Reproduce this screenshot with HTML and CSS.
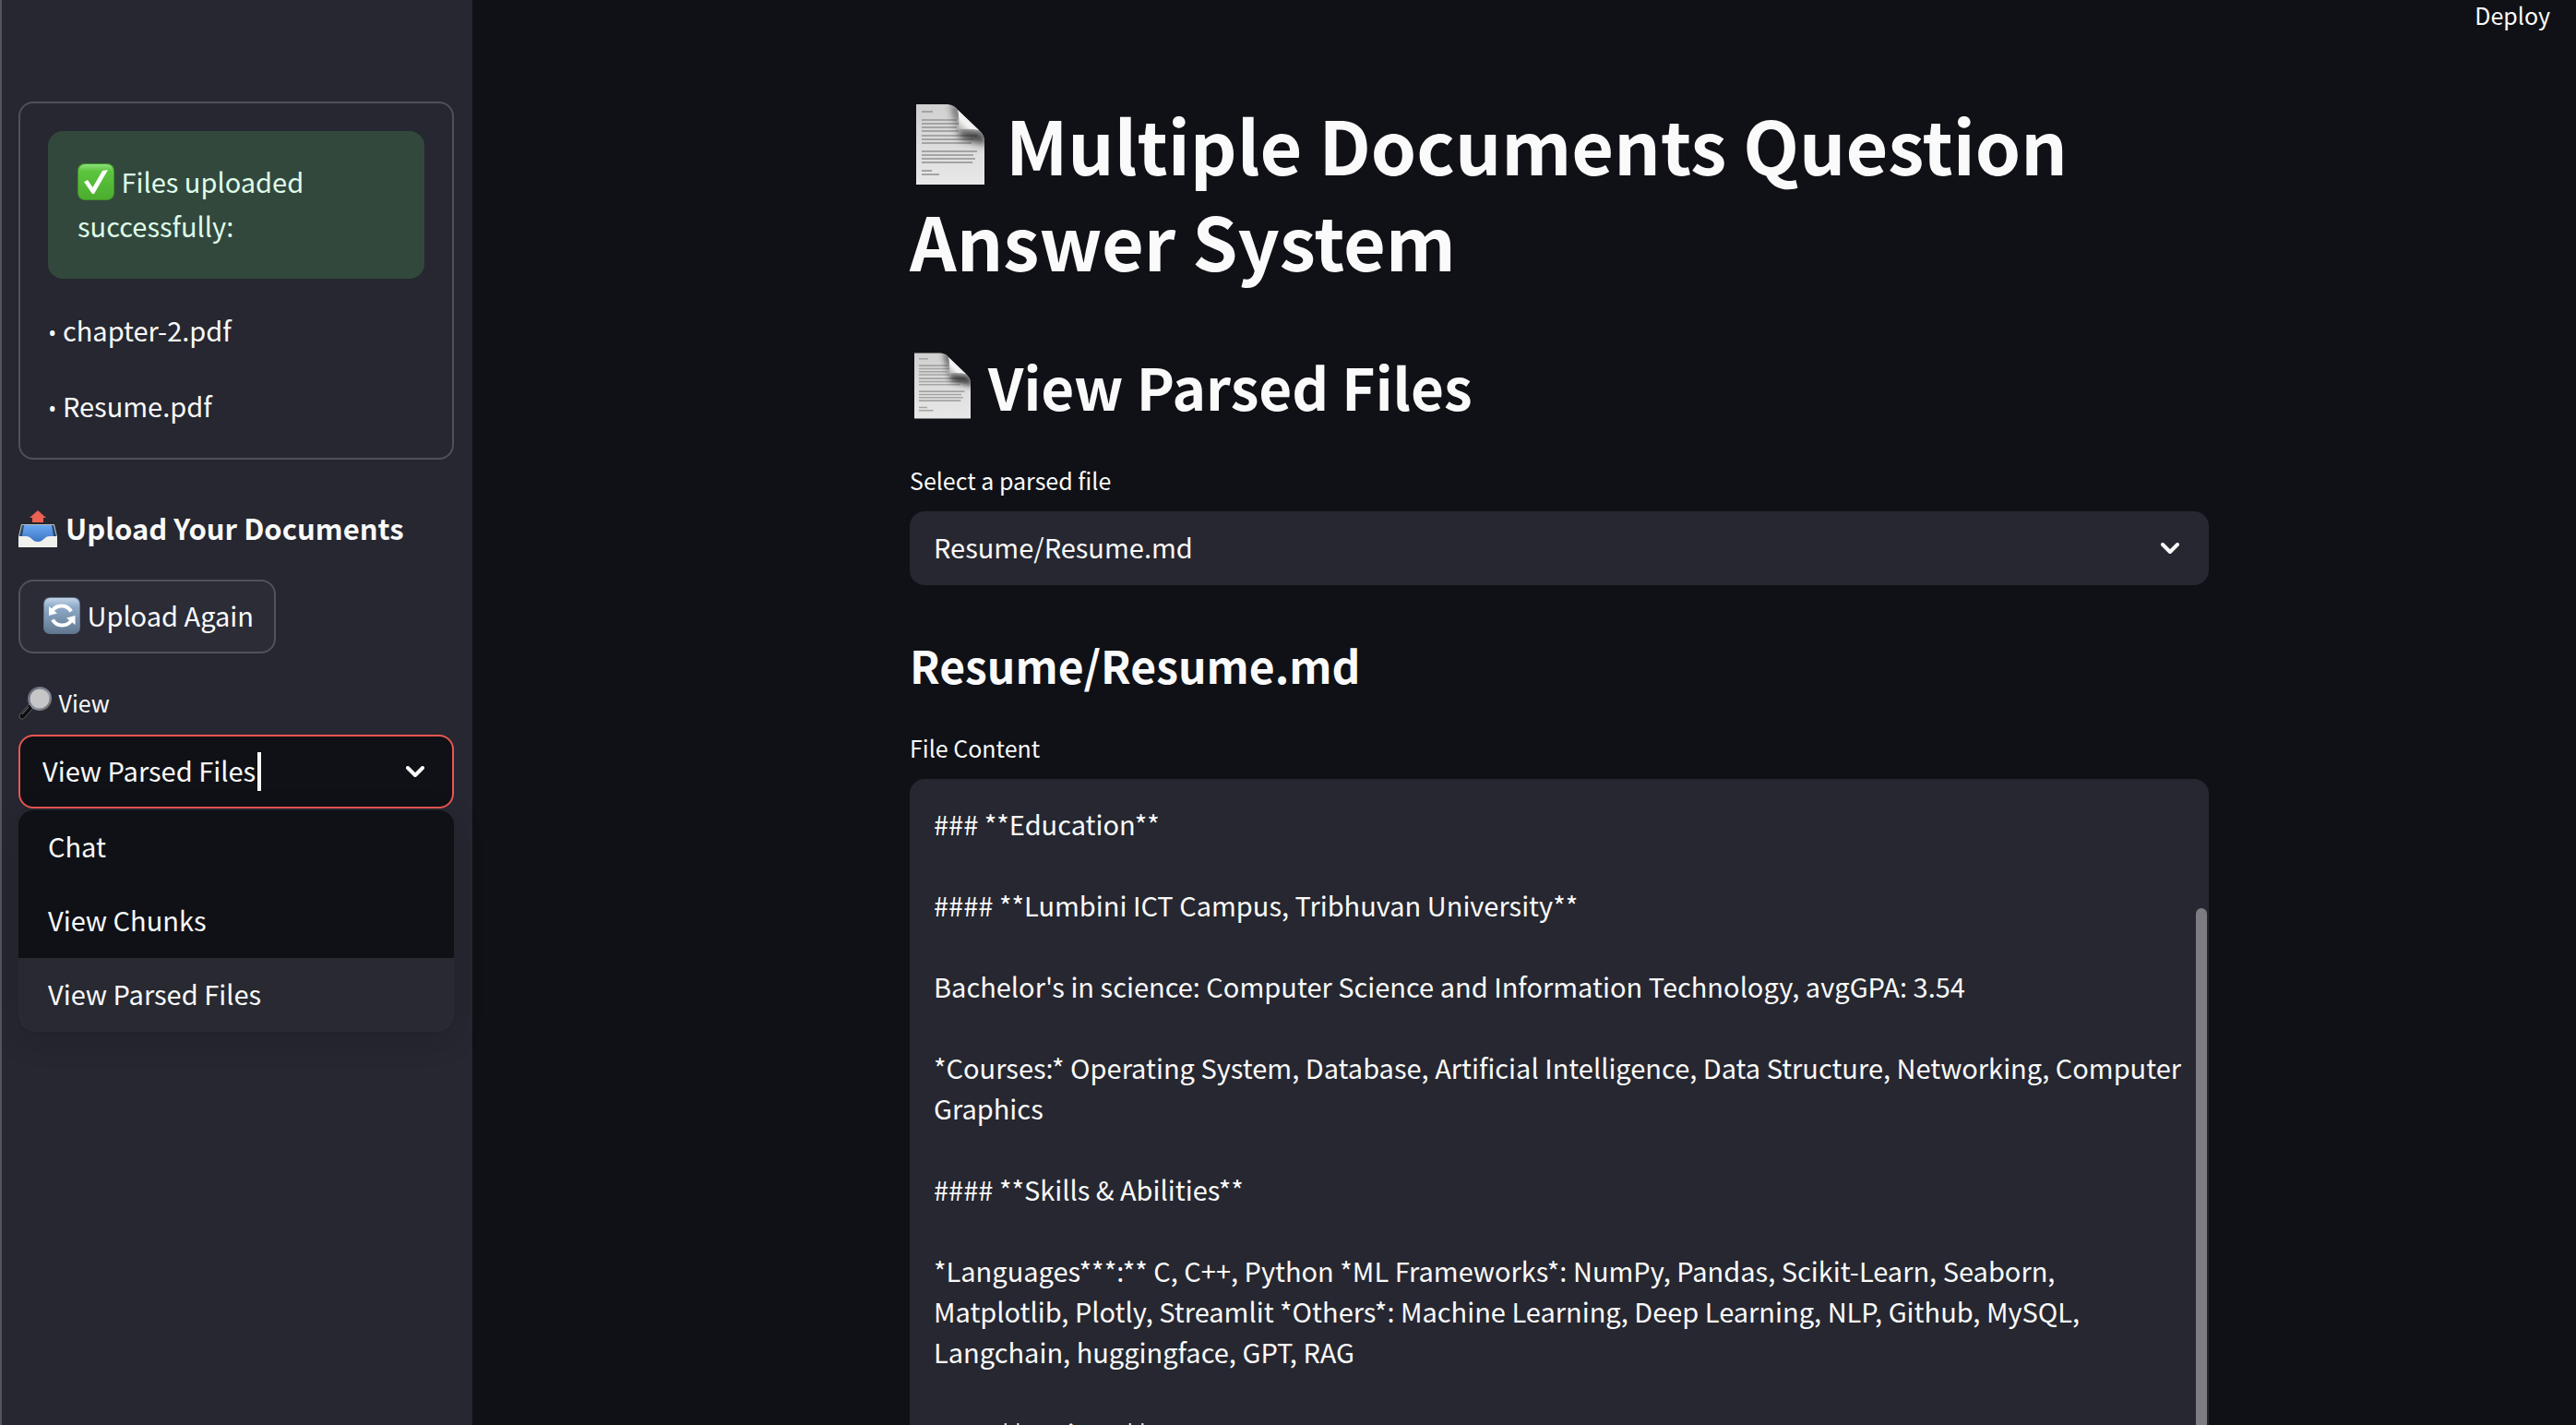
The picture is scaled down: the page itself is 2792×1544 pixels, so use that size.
FILE: index.html
```html
<!DOCTYPE html>
<html lang="en">
<head>
<meta charset="utf-8">
<meta name="viewport" content="width=device-width, initial-scale=1">
<title>Multiple Documents Question Answer System</title>
<link rel="stylesheet" href="styles.css">
</head>
<body>
<svg class="defs" aria-hidden="true">
  <defs>
    <linearGradient id="paper" x1="0" y1="0" x2="0" y2="1"><stop offset="0" stop-color="#d0d0d0"/><stop offset="1" stop-color="#e8e8e8"/></linearGradient>
    <linearGradient id="curl" x1="0" y1="1" x2=".7" y2=".3"><stop offset="0" stop-color="#a8a8a8"/><stop offset=".5" stop-color="#f4f4f4"/><stop offset="1" stop-color="#e6e6e6"/></linearGradient>
    <linearGradient id="green" x1="0" y1="0" x2="0" y2="1"><stop offset="0" stop-color="#8be07a"/><stop offset=".2" stop-color="#5cc43f"/><stop offset="1" stop-color="#4bad2e"/></linearGradient>
    <linearGradient id="steel" x1="0" y1="0" x2="0" y2="1"><stop offset="0" stop-color="#c3d5e6"/><stop offset=".25" stop-color="#8fabc8"/><stop offset="1" stop-color="#627891"/></linearGradient>
    <linearGradient id="trayblue" x1="0" y1="0" x2="0" y2="1"><stop offset="0" stop-color="#6aa7f2"/><stop offset="1" stop-color="#3c77c4"/></linearGradient>
    <linearGradient id="rim" x1="0" y1="0" x2="1" y2="1"><stop offset="0" stop-color="#5b5e68"/><stop offset=".6" stop-color="#8d93a3"/><stop offset="1" stop-color="#66605c"/></linearGradient>
    <filter id="soft" x="-50%" y="-50%" width="200%" height="200%"><feGaussianBlur stdDeviation="4"/></filter>
    <clipPath id="sheet"><path d="M0 0H34Q42 1 46 7L68 28Q74 33 74 40V87H0Z"/></clipPath>
    <symbol id="page" viewBox="0 0 74 87">
      <g clip-path="url(#sheet)">
        <rect width="74" height="87" fill="url(#paper)"/>
        <path d="M6 8h12M6 17h38M6 21h40M6 25h38M6 29h40M6 34h60M6 38h56M6 42h54M6 51h60M6 55h56M6 59h58M6 63h55M6 72h11M6 76h19" stroke="#a4a4a4" stroke-width="2" fill="none"/>
        <path d="M38 -2L47 4V28L72 30L78 44L48 37Q44 20 38 -2Z" fill="#333" filter="url(#soft)"/>
      </g>
      <path d="M45 6L68 28Q60 26 46 27Q47 14 45 6Z" fill="url(#curl)"/>
    </symbol>
    <symbol id="chevron" viewBox="0 0 20 12"><path d="M2 2L10 10L18 2" fill="none" stroke="#fafafa" stroke-width="4" stroke-linecap="round" stroke-linejoin="round"/></symbol>
  </defs>
</svg>

<div class="app">
  <aside class="sidebar">
    <section class="card">
      <div class="success">
        <svg class="emoji" viewBox="0 0 40 40" aria-hidden="true"><rect width="40" height="40" rx="8" fill="#3f9428"/><rect x="1" y="1" width="38" height="38" rx="7" fill="url(#green)"/><path d="M7 20L11 18L16.500 26L27 8L33 7L18 33H16Z" fill="#fff"/></svg>
        Files uploaded successfully:
      </div>
      <p class="file"><span class="bullet">• </span>chapter-2.pdf</p>
      <p class="file"><span class="bullet">• </span>Resume.pdf</p>
    </section>

    <h3 class="side-title">
      <svg class="emoji tray" viewBox="0 0 42 40" aria-hidden="true"><path d="M3 15H39L42 28V40H0V28Z" fill="#b9bdb9"/><path d="M4 16H38L41 28L36 32H6L1 28Z" fill="#27486f"/><path d="M6 16H36L38 28L27 34H15L4 28Z" fill="url(#trayblue)"/><path d="M0 28H8C15 28 14 34 21 34S27 28 34 28H42V40H0Z" fill="#f0f0ec"/><path d="M21 0L30 8H27V13H15V8H12Z" fill="#ec6152"/></svg>
      Upload Your Documents
    </h3>

    <button class="upload" type="button">
      <svg class="emoji" viewBox="0 0 40 40" aria-hidden="true"><rect width="40" height="40" rx="7" fill="#5f7690"/><rect x="1" y="1" width="38" height="38" rx="6" fill="url(#steel)"/><path d="M9.500 15A12 12 0 0 1 30 15.500" fill="none" stroke="#fff" stroke-width="4"/><path d="M6 10V20L15 17.500Z" fill="#fff"/><path d="M30.500 25A12 12 0 0 1 10 24.500" fill="none" stroke="#fff" stroke-width="4"/><path d="M34.500 30V20L25 22.500Z" fill="#fff"/></svg>
      Upload Again
    </button>

    <label class="label" for="view">
      <svg class="emoji lens" viewBox="0 0 36 36" aria-hidden="true"><path d="M4 32L13 22" stroke="#55575c" stroke-width="7" stroke-linecap="round"/><path d="M4 32L13 22" stroke="#0c0d0f" stroke-width="5" stroke-linecap="round"/><path d="M4 30L11 22" stroke="#7d8085" stroke-width="1"/><circle cx="23" cy="13" r="13" fill="url(#rim)"/><circle cx="23" cy="13" r="10.500" fill="#c6c6c8"/></svg>
      View
    </label>
    <div class="combo">
      <input class="combo-input" id="view" type="text" role="combobox" aria-expanded="true" aria-controls="view-menu" value="View Parsed Files">
      <span class="caret"></span>
      <svg class="chevron" aria-hidden="true"><use href="#chevron"/></svg>
      <ul class="menu" id="view-menu" role="listbox">
        <li class="option" role="option">Chat</li>
        <li class="option" role="option">View Chunks</li>
        <li class="option selected" role="option" aria-selected="true">View Parsed Files</li>
      </ul>
    </div>
  </aside>

  <div class="page">
    <header class="toolbar"><button class="deploy" type="button">Deploy</button></header>
    <main class="content">
      <h1 class="title"><svg class="emoji doc-lg" aria-hidden="true"><use href="#page"/></svg> Multiple Documents Question Answer System</h1>
      <h2 class="subtitle"><svg class="emoji doc-md" aria-hidden="true"><use href="#page"/></svg> View Parsed Files</h2>
      <label class="label" for="file">Select a parsed file</label>
      <div class="picker">
        <select class="picker-select" id="file"><option>Resume/Resume.md</option></select>
        <svg class="chevron" aria-hidden="true"><use href="#chevron"/></svg>
      </div>
      <h3 class="file-name">Resume/Resume.md</h3>
      <label class="label" for="body">File Content</label>
      <div class="viewer">
        <textarea class="viewer-text" id="body" spellcheck="false">### **Education**

#### **Lumbini ICT Campus, Tribhuvan University**

Bachelor's in science: Computer Science and Information Technology, avgGPA: 3.54

*Courses:* Operating System, Database, Artificial Intelligence, Data Structure, Networking, Computer Graphics

#### **Skills &amp; Abilities**

*Languages***:** C, C++, Python *ML Frameworks*: NumPy, Pandas, Scikit-Learn, Seaborn, Matplotlib, Plotly, Streamlit *Others*: Machine Learning, Deep Learning, NLP, Github, MySQL, Langchain, huggingface, GPT, RAG

#### **Projects**</textarea>
        <span class="thumb"></span>
      </div>
    </main>
  </div>
</div>
</body>
</html>
```
FILE: styles.css
```css
* { box-sizing: border-box; }

body {
  margin: 0;
  height: 100vh;
  overflow: hidden;
  background: #0f1116;
  color: #fafafa;
  font: 29px/50px "Noto Sans CJK SC", "Open Sans", sans-serif;
}

h1, h2, h3, p, ul { margin: 0; }
button, input, select, textarea { font: inherit; color: inherit; }

.defs { position: absolute; width: 0; height: 0; }

.app { display: flex; height: 100%; overflow: hidden; }

.emoji { width: 40px; height: 40px; vertical-align: -8px; margin-right: 1px; }

/* Sidebar */
.sidebar {
  display: flex;
  flex-direction: column;
  align-items: stretch;
  flex: 0 0 512px;
  padding: 110px 20px 0 18px;
  border-left: 2px solid #54555a;
  background: #262730;
}

.card {
  display: flex;
  flex-direction: column;
  gap: 32px;
  padding: 30px;
  border: 2px solid #4f5058;
  border-radius: 16px;
}

.success {
  padding: 30px 32px 34px;
  border-radius: 16px;
  background: #33483d;
  color: #dffde9;
  line-height: 48px;
}

.file { padding-bottom: 4px; line-height: 46px; }
.bullet { font: 25px/25px "Open Sans", sans-serif; }

.side-title {
  margin-top: 52px;
  font-size: 31px;
  line-height: 44px;
}
.tray { width: 42px; margin-right: 2px; }

.upload {
  align-self: flex-start;
  height: 80px;
  margin-top: 34px;
  padding: 0 22px 4px 25px;
  border: 2px solid #51525b;
  border-radius: 16px;
  background: #2b2c36;
}

.label { font-size: 25px; line-height: 40px; }
.sidebar .label { margin-top: 33px; }
.lens { width: 36px; height: 36px; margin-right: 2px; vertical-align: -8px; }

.combo {
  position: relative;
  display: flex;
  align-items: center;
  height: 80px;
  margin-top: 15px;
  padding: 0 30px 0 24px;
  border: 2px solid #ea5652;
  border-radius: 16px;
  background: #0f1116;
}
.combo-input {
  field-sizing: content;
  padding: 0 0 4px;
  border: 0;
  outline: 0;
  background: none;
}
.caret { width: 4px; height: 42px; margin-left: 2px; background: #fafafa; }
.chevron { width: 20px; height: 12px; margin-left: auto; pointer-events: none; }

.menu {
  position: absolute;
  top: 80px;
  left: -2px;
  right: -2px;
  overflow: hidden;
  padding: 0;
  border-radius: 16px;
  background: #0f1116;
  box-shadow: 0 8px 32px rgba(15, 17, 22, .2);
  list-style: none;
}
.option { padding: 0 32px 4px; line-height: 76px; }
.selected { background: #282931; }

/* Page */
.page { flex: 1; min-width: 0; }
.toolbar {
  display: flex;
  justify-content: flex-end;
  align-items: flex-start;
  height: 36px;
  padding-right: 28px;
}
.deploy {
  padding: 0;
  border: 0;
  background: none;
  font-size: 25px;
  line-height: 32px;
}

.content {
  display: flex;
  flex-direction: column;
  max-width: 1484px;
  margin: 0 auto;
  padding: 68px 0 0 76px;
}

.title { font-size: 79px; line-height: 104px; }
.doc-lg { width: 74px; height: 87px; margin: 0 5px 0 7px; vertical-align: -10px; }
.subtitle { margin-top: 64px; font-size: 62px; line-height: 84px; }
.doc-md { width: 61px; height: 72px; margin: 0 5px 0 5px; vertical-align: -9px; }
.content .label { margin-top: 40px; }

.picker { position: relative; margin-top: 14px; }
.picker-select {
  display: block;
  width: 100%;
  height: 80px;
  padding: 0 26px 4px;
  border: 0;
  border-radius: 16px;
  background: #262730;
  appearance: none;
}
.picker .chevron { position: absolute; top: 34px; right: 32px; }

.file-name { margin-top: 56px; font-size: 48px; line-height: 60px; }

.viewer { position: relative; margin-top: 14px; }
.viewer-text {
  display: block;
  width: 100%;
  height: 1000px;
  padding: 26px;
  border: 0;
  outline: 0;
  border-radius: 16px;
  background: #262730;
  line-height: 44px;
  resize: none;
  overflow: hidden;
}
.thumb {
  position: absolute;
  top: 140px;
  right: 2px;
  bottom: 2px;
  width: 12px;
  border-radius: 6px;
  background: #7c7c82;
}
```
